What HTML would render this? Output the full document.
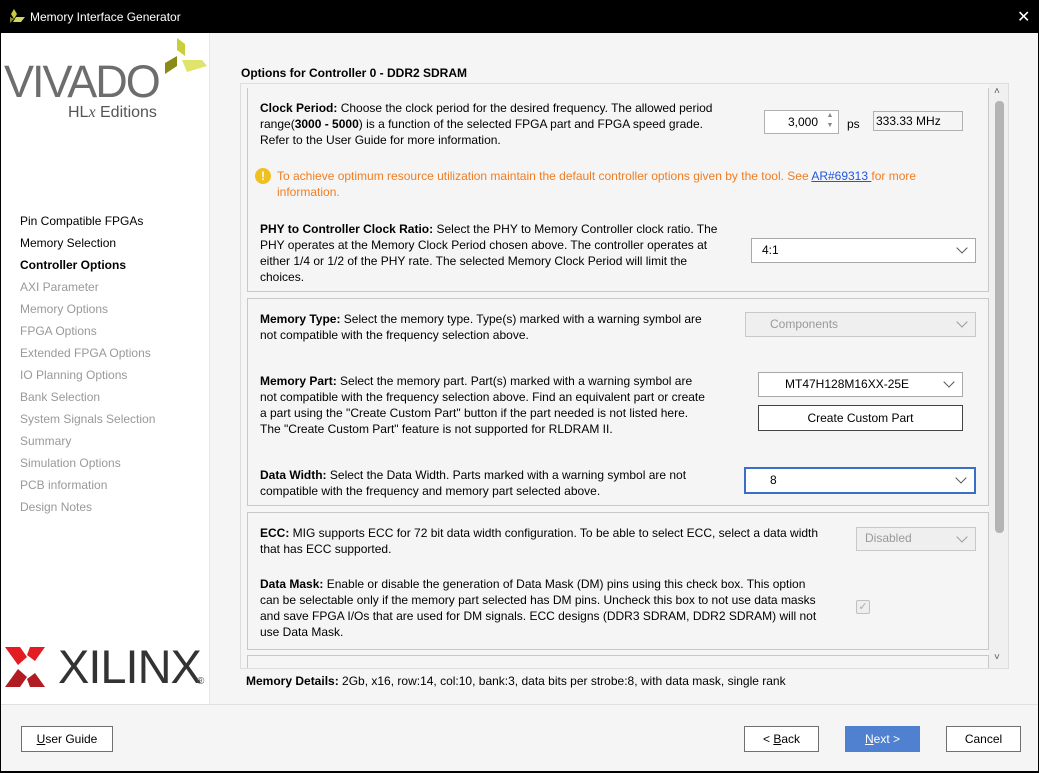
<!DOCTYPE html>
<html><head><meta charset="utf-8"><style>
*{margin:0;padding:0;box-sizing:border-box}
body{width:1039px;height:773px;position:relative;overflow:hidden;background:#f5f5f5;font-family:"Liberation Sans",Arial,sans-serif;font-size:12px;color:#000}
.a{position:absolute}
.t{line-height:16px}
b{font-weight:bold}
.nav{position:absolute;left:20px;font-size:12px;color:#999}
.grp{position:absolute;left:247px;width:742px;border:1px solid #c8c8c8;background:#f5f5f5}
.box{position:absolute;background:#fff;border:1px solid #a8a8a8;font-size:12px;padding-left:10px;line-height:22px}
.chev{position:absolute;right:9px;width:8px;height:8px;border-right:1.6px solid #555;border-bottom:1.6px solid #555;transform:rotate(45deg);top:5px}
.btn{position:absolute;border:1px solid #707070;background:#fff;text-align:center;line-height:24px;font-size:12px}
</style></head><body>
<div class="a" style="left:0;top:0;width:1039px;height:33px;background:#000"></div>
<svg class="a" style="left:8px;top:8px" width="18" height="16"><polygon points="6,1 9,6 6,11 3,6" fill="#c9c93a"/><polygon points="2,9 6,11 2,15" fill="#8a8a1a"/><polygon points="8,9 17,9 13,14 5,14" fill="#d4d460"/></svg>
<div class="a" style="left:30px;top:10px;color:#fff;font-size:12px">Memory Interface Generator</div>
<div class="a" style="left:1017px;top:7px;color:#fff;font-size:16px">✕</div>
<div class="a" style="left:0;top:33px;width:1px;height:740px;background:#000"></div>
<div class="a" style="left:1038px;top:33px;width:1px;height:740px;background:#000"></div>
<div class="a" style="left:0;top:771px;width:1039px;height:2px;background:#000"></div>
<div class="a" style="left:1px;top:33px;width:209px;height:671px;background:#fff;border-right:1px solid #e8e8e8"></div>
<div class="a" style="left:4px;top:57px;font-size:45px;color:#6d6d6d;letter-spacing:-2px;line-height:50px">VIVADO</div>
<svg class="a" style="left:165px;top:38px" width="42" height="40"><polygon points="12,0 20,6 20,18 12,12" fill="#c8cf38"/><polygon points="12,18 0,25 0,36 12,28" fill="#8a8a18"/><polygon points="17,22 37,22 42,28 22,34" fill="#e0e46a"/></svg>
<div class="a" style="left:68px;top:104px;font-size:16px;color:#555">HL<i style="font-family:'Liberation Serif',serif">x</i> Editions</div>
<div class="nav" style="top:214px;color:#000">Pin Compatible FPGAs</div>
<div class="nav" style="top:236px;color:#000">Memory Selection</div>
<div class="nav" style="top:258px;color:#000;font-weight:bold">Controller Options</div>
<div class="nav" style="top:280px">AXI Parameter</div>
<div class="nav" style="top:302px">Memory Options</div>
<div class="nav" style="top:324px">FPGA Options</div>
<div class="nav" style="top:346px">Extended FPGA Options</div>
<div class="nav" style="top:368px">IO Planning Options</div>
<div class="nav" style="top:390px">Bank Selection</div>
<div class="nav" style="top:412px">System Signals Selection</div>
<div class="nav" style="top:434px">Summary</div>
<div class="nav" style="top:456px">Simulation Options</div>
<div class="nav" style="top:478px">PCB information</div>
<div class="nav" style="top:500px">Design Notes</div>
<svg class="a" style="left:5px;top:647px" width="40" height="40"><polygon points="0,0 15,0 22,10 13,18" fill="#e31b23"/><polygon points="0,40 15,40 22,30 13,22" fill="#b01c22"/><polygon points="25,0 40,0 30,14 22,8" fill="#e31b23"/><polygon points="25,40 40,40 30,26 22,32" fill="#b01c22"/></svg>
<div class="a" style="left:58px;top:640px;font-size:47px;color:#333;line-height:54px;letter-spacing:-1px">XILINX</div>
<div class="a" style="left:197px;top:676px;font-size:10px;color:#555">®</div>
<div class="a" style="left:1px;top:704px;width:1037px;height:1px;background:#e0e0e0"></div>

<div class="a" style="left:241px;top:66px;font-weight:bold">Options for Controller 0 - DDR2 SDRAM</div>
<div class="a" style="left:240px;top:83px;width:769px;height:586px;border:1px solid #ddd;background:#f5f5f5"></div>
<div class="a" style="left:989px;top:84px;width:19px;height:584px;background:#f0f0f0"></div>
<div class="a" style="left:995px;top:101px;width:9px;height:432px;background:#b4b4b4;border-radius:4px"></div>
<div class="a" style="left:994px;top:86px;font-size:10px;color:#555">&#x2c4;</div>
<div class="a" style="left:994px;top:652px;font-size:10px;color:#555">&#x2c5;</div>

<div class="grp" style="top:88px;height:204px;border-top:none"></div>
<div class="a t" style="left:260px;top:100px;width:470px">
<b>Clock Period:</b> Choose the clock period for the desired frequency. The allowed period range(<b>3000 - 5000</b>) is a function of the selected FPGA part and FPGA speed grade. Refer to the User Guide for more information.</div>
<div class="a" style="left:764px;top:110px;width:75px;height:24px;background:#fff;border:1px solid #b0b0b0;text-align:right;padding-right:20px;line-height:22px">3,000</div>
<div class="a" style="left:822px;top:111px;width:16px;height:22px;font-size:7px;color:#888;line-height:10px;text-align:center">▲<br>▼</div>
<div class="a" style="left:847px;top:117px">ps</div>
<div class="a" style="left:873px;top:111px;width:90px;height:20px;border:1px solid #b0b0b0;line-height:18px;padding-left:2px">333.33 MHz</div>
<div class="a" style="left:255px;top:168px;width:16px;height:16px;border-radius:50%;background:#f0c020;color:#fff;font-weight:bold;text-align:center;line-height:16px;font-size:12px">!</div>
<div class="a t" style="left:277px;top:168px;width:680px;color:#f07d22">To achieve optimum resource utilization maintain the default controller options given by the tool. See <span style="color:#2255dd;text-decoration:underline">AR#69313 </span>for more information.</div>
<div class="a t" style="left:260px;top:221px;width:465px"><b>PHY to Controller Clock Ratio:</b> Select the PHY to Memory Controller clock ratio. The PHY operates at the Memory Clock Period chosen above. The controller operates at either 1/4 or 1/2 of the PHY rate. The selected Memory Clock Period will limit the choices.</div>
<div class="box" style="left:751px;top:238px;width:225px;height:25px">4:1<div class="chev"></div></div>

<div class="grp" style="top:298px;height:208px"></div>
<div class="a t" style="left:260px;top:311px;width:455px"><b>Memory Type:</b> Select the memory type. Type(s) marked with a warning symbol are not compatible with the frequency selection above.</div>
<div class="box" style="left:745px;top:312px;width:231px;height:25px;background:#efefef;border-color:#c8c8c8;color:#999;padding-left:24px">Components<div class="chev" style="border-color:#999"></div></div>
<div class="a t" style="left:260px;top:373px;width:450px"><b>Memory Part:</b> Select the memory part. Part(s) marked with a warning symbol are not compatible with the frequency selection above. Find an equivalent part or create a part using the "Create Custom Part" button if the part needed is not listed here. The "Create Custom Part" feature is not supported for RLDRAM II.</div>
<div class="box" style="left:758px;top:372px;width:205px;height:25px;padding-left:26px">MT47H128M16XX-25E<div class="chev"></div></div>
<div class="btn" style="left:758px;top:405px;width:205px;height:26px;border-color:#444">Create Custom Part</div>
<div class="a t" style="left:260px;top:467px;width:470px"><b>Data Width:</b> Select the Data Width. Parts marked with a warning symbol are not compatible with the frequency and memory part selected above.</div>
<div class="box" style="left:744px;top:467px;width:232px;height:27px;border:2px solid #3a6fc4;padding-left:24px">8<div class="chev"></div></div>

<div class="grp" style="top:512px;height:138px"></div>
<div class="a t" style="left:260px;top:525px;width:580px"><b>ECC:</b> MIG supports ECC for 72 bit data width configuration. To be able to select ECC, select a data width that has ECC supported.</div>
<div class="box" style="left:856px;top:527px;width:120px;height:24px;background:#efefef;border-color:#c8c8c8;color:#999;padding-left:8px;line-height:21px">Disabled<div class="chev" style="border-color:#999"></div></div>
<div class="a t" style="left:260px;top:576px;width:560px"><b>Data Mask:</b> Enable or disable the generation of Data Mask (DM) pins using this check box. This option can be selectable only if the memory part selected has DM pins. Uncheck this box to not use data masks and save FPGA I/Os that are used for DM signals. ECC designs (DDR3 SDRAM, DDR2 SDRAM) will not use Data Mask.</div>
<div class="a" style="left:856px;top:600px;width:14px;height:14px;border:1px solid #c0c0c0;border-radius:2px;background:#eee;color:#aaa;font-size:11px;line-height:12px;text-align:center">✓</div>
<div class="grp" style="top:655px;height:13px;border-bottom:none"></div>

<div class="a" style="left:246px;top:674px"><b>Memory Details:</b> 2Gb, x16, row:14, col:10, bank:3, data bits per strobe:8, with data mask, single rank</div>

<div class="btn" style="left:21px;top:726px;width:92px;height:26px"><u>U</u>ser Guide</div>
<div class="btn" style="left:744px;top:726px;width:75px;height:26px">&lt; <u>B</u>ack</div>
<div class="btn" style="left:845px;top:726px;width:75px;height:26px;background:#5080d0;border-color:#5080d0;color:#fff"><u>N</u>ext &gt;</div>
<div class="btn" style="left:946px;top:726px;width:75px;height:26px">Cancel</div>
</body></html>
